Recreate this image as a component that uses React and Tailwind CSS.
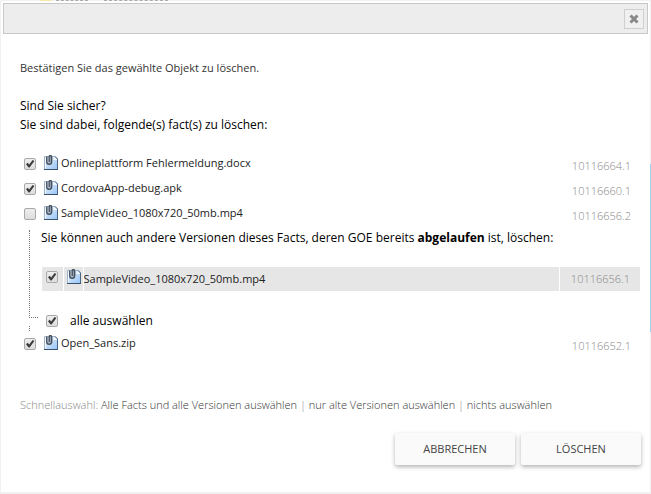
import React, { useState } from 'react';

const facts = [
  { id: '10116664.1', name: 'Onlineplattform Fehlermeldung.docx' },
  { id: '10116660.1', name: 'CordovaApp-debug.apk' },
  { id: '10116656.2', name: 'SampleVideo_1080x720_50mb.mp4', oldVersions: [{ id: '10116656.1', name: 'SampleVideo_1080x720_50mb.mp4' }] },
  { id: '10116652.1', name: 'Open_Sans.zip' },
];

const newestIds = facts.map((fact) => fact.id);
const oldIds = facts.flatMap((fact) => (fact.oldVersions || []).map((version) => version.id));

const FactIcon = () => (
  <svg width="16" height="16" viewBox="0 0 16 16" className="shrink-0" aria-hidden="true">
    <defs>
      <linearGradient id="paper" x1="0" y1="0" x2="1" y2="1">
        <stop offset="0" stopColor="#e8f2fd" />
        <stop offset="0.5" stopColor="#c3dcf8" />
        <stop offset="1" stopColor="#93c4f9" />
      </linearGradient>
    </defs>
    <path d="M1.5 1.5H12L14.5 3.5V14.5H1.5Z" fill="url(#paper)" stroke="#9fb4ca" />
    <path d="M2.5 13.5V2.5" stroke="#f3f8fe" />
    <path d="M10.5 2H12L14 4V5H10.5Z" fill="#f4f9ff" />
    <path d="M12 1.5L14.5 4V14.5" fill="none" stroke="#4d6680" />
    <path d="M1 14.5H15" stroke="#37506b" />
    <path d="M3.8 1.5V7Q3.8 9.2 6.2 9.2Q8.6 9.2 8.6 7V2Q8.6 .6 7.4 .6Q6.2 .6 6.2 2V7.2" fill="none" stroke="#46505d" strokeWidth="1.5" />
    <path d="M5 2V7.5M7.4 2V8" stroke="#8f9baa" strokeWidth="1" />
  </svg>
);

const Checkbox = ({ id, label, checked, onChange }) => (
  <span className="relative block size-3 shrink-0">
    <input
      id={id}
      type="checkbox"
      aria-label={label}
      checked={checked}
      onChange={onChange}
      className="block size-3 appearance-none rounded-xs border border-[#a9a9a9] bg-linear-to-b from-[#eeeeee] to-[#dddddd]"
    />
    {checked && (
      <svg width="12" height="12" viewBox="0 0 12 12" className="pointer-events-none absolute inset-0" aria-hidden="true">
        <path d="M2 6.2L3.7 4.8L5.2 6.4L8.6 2L10.4 3L5.6 9.6H4.6Z" fill="#3c3c3c" />
      </svg>
    )}
  </span>
);

const OldVersions = ({ versions, selected, toggle, setMany }) => {
  const ids = versions.map((version) => version.id);
  const allSelected = ids.every((id) => selected.includes(id));

  return (
    <div className="flex">
      {/* Dotted tree line */}
      <div className="mr-[3px] ml-[9px] flex w-[9px] shrink-0 flex-col">
        <div className="mt-1 flex-1 border-b border-l border-dotted border-[#777777]" />
        <div className="mt-2 h-[5px] border-l border-dotted border-[#777777]" />
      </div>
      <div className="min-w-0 flex-1 text-xs text-black">
        <p className="pt-1 leading-4">
          Sie können auch andere Versionen dieses Facts, deren GOE bereits <b>abgelaufen</b> ist, löschen:
        </p>
        <div className="mt-[21px] pl-px">
          <table className="w-full border-collapse text-[11px]">
            <tbody>
              {versions.map((version) => (
                <tr key={version.id} className="h-6">
                  <td className="w-[21px] border-r border-white bg-[#e6e6e6] bg-clip-padding pb-1 pl-1">
                    <Checkbox
                      id={version.id}
                      label={version.name}
                      checked={selected.includes(version.id)}
                      onChange={() => toggle(version.id)}
                    />
                  </td>
                  <td className="w-5 border-r border-white bg-[#e6e6e6] bg-clip-padding pb-1 pl-0.5">
                    <FactIcon />
                  </td>
                  <td className="border-r border-white bg-[#e6e6e6] bg-clip-padding text-[#222222]">
                    <label htmlFor={version.id}>{version.name}</label>
                  </td>
                  <td className="w-[81px] bg-[#e6e6e6] pr-2.5 text-right font-light text-[#888888]">{version.id}</td>
                </tr>
              ))}
            </tbody>
          </table>
        </div>
        <div className="mt-5 flex h-5 items-center gap-3 pl-[5px]">
          <Checkbox id="select-all-old" checked={allSelected} onChange={() => setMany(ids, !allSelected)} />
          <label htmlFor="select-all-old">alle auswählen</label>
        </div>
      </div>
    </div>
  );
};

const FactRow = ({ fact, checked, onChange }) => (
  <div className="flex h-[25px] items-start pl-1 text-[11px]">
    <div className="pt-[7px]">
      <Checkbox id={fact.id} checked={checked} onChange={onChange} />
    </div>
    <div className="ml-[7px] pt-1">
      <FactIcon />
    </div>
    <label htmlFor={fact.id} className="ml-0.5 flex-1 pt-1 leading-4 text-[#222222]">
      {fact.name}
    </label>
    <span className="pt-[7px] pr-[9px] leading-4 font-light text-[#888888]">{fact.id}</span>
  </div>
);

const actionClass = 'h-8 w-[120px] rounded-xs bg-[#fafafa] text-[11px] text-[#444444] shadow-[0_2px_4px_rgba(0,0,0,0.3)]';

const App = () => {
  const [selected, setSelected] = useState(['10116664.1', '10116660.1', '10116656.1', '10116652.1']);

  const toggle = (id) => {
    setSelected(selected.includes(id) ? selected.filter((item) => item !== id) : [...selected, id]);
  };

  const setMany = (ids, on) => {
    const rest = selected.filter((item) => !ids.includes(item));
    setSelected(on ? [...rest, ...ids] : rest);
  };

  const pick = (ids) => (e) => {
    e.preventDefault();
    setSelected(ids);
  };

  return (
    <div className="relative min-h-screen bg-[#f1f1f1] p-px font-['Open_Sans',sans-serif]">
      {/* Page behind the dialog */}
      <div className="absolute top-0 left-10 flex h-px gap-1" aria-hidden="true">
        <span className="w-3 bg-[#f5e6ab]" />
        <span className="w-8 border-t border-dashed border-[#aaaaaa]" />
        <span className="w-2" />
        <span className="w-16 border-t border-dashed border-[#aaaaaa]" />
      </div>
      <div className="absolute top-[164px] right-0 h-[168px] w-px bg-[#9bd3f3]" aria-hidden="true" />

      <div role="dialog" aria-label="Löschen" className="bg-white p-0.5 pb-[27px]">
        <header className="flex h-[31px] items-center justify-end border border-[#c8c8c8] bg-[#ededed] pr-[3px]">
          <button aria-label="Schließen" className="flex size-5 items-center justify-center border border-[#cfcfcf] bg-[#f0f0f0]">
            <svg width="10" height="10" viewBox="0 0 10 10" aria-hidden="true">
              <path d="M1.5 1.5L8.5 8.5M8.5 1.5L1.5 8.5" stroke="#888888" strokeWidth="3" />
            </svg>
          </button>
        </header>

        <main className="pr-2 pl-[17px]">
          <p className="pt-[26px] text-[11px] leading-4 text-[#333333]">Bestätigen Sie das gewählte Objekt zu löschen.</p>
          <div className="mt-5 text-xs leading-[19px] text-black">
            <p>Sind Sie sicher?</p>
            <p>Sie sind dabei, folgende(s) fact(s) zu löschen:</p>
          </div>

          <ul className="mt-[17px]">
            {facts.map((fact) => (
              <li key={fact.id}>
                <FactRow fact={fact} checked={selected.includes(fact.id)} onChange={() => toggle(fact.id)} />
                {fact.oldVersions && (
                  <OldVersions versions={fact.oldVersions} selected={selected} toggle={toggle} setMany={setMany} />
                )}
              </li>
            ))}
          </ul>

          <p className="mt-[41px] text-[11px] leading-4 font-light text-[#333333]">
            <span className="text-[#888888]">Schnellauswahl: </span>
            <a href="#alle" onClick={pick([...newestIds, ...oldIds])}>Alle Facts und alle Versionen auswählen</a>
            <span className="text-[#888888]"> | </span>
            <a href="#alte" onClick={pick(oldIds)}>nur alte Versionen auswählen</a>
            <span className="text-[#888888]"> | </span>
            <a href="#nichts" onClick={pick([])}>nichts auswählen</a>
          </p>
        </main>

        <footer className="mt-5 flex justify-end gap-1.5 pr-[7px]">
          <button className={actionClass}>ABBRECHEN</button>
          <button className={actionClass}>LÖSCHEN</button>
        </footer>
      </div>
    </div>
  );
};

export default App;
